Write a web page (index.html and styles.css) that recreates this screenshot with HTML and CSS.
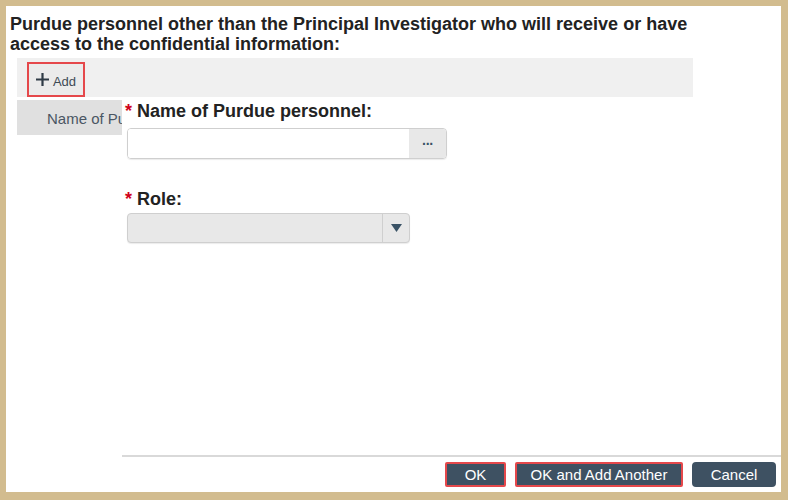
FILE: index.html
```html
<!DOCTYPE html>
<html lang="en">

<head>
    <meta charset="UTF-8">
    <meta name="viewport" content="width=device-width, initial-scale=1.0">
    <title>Purdue personnel</title>
    <link rel="stylesheet" href="styles.css">
</head>

<body>
    <div class="frame">
        <h1 class="question">Purdue personnel other than the Principal Investigator who will receive or have<br>
            access to the confidential information:</h1>

        <!-- Barra de herramientas -->
        <div class="toolbar">
            <button class="add-btn">
                <svg class="plus" width="13" height="13" viewBox="0 0 13 13">
                    <path d="M6.5 0 V13 M0 6.5 H13" stroke="#2f3b46" stroke-width="2.2" />
                </svg>
                Add
            </button>
        </div>

        <!-- Cabecera de la tabla -->
        <div class="table-head">
            <div class="head-cell">Name of Purdue personnel</div>
        </div>

        <!-- Dialogo encima de la tabla -->
        <div class="dialog">
            <div class="dialog-body">
                <div class="field">
                    <label class="field-label"><span class="req">*</span> Name of Purdue personnel:</label>
                    <div class="lookup">
                        <input type="text" class="lookup-input">
                        <span class="lookup-btn">&middot;&middot;&middot;</span>
                    </div>
                </div>

                <div class="field field-role">
                    <label class="field-label"><span class="req">*</span> Role:</label>
                    <div class="select">
                        <span class="select-value"></span>
                        <span class="select-arrow">
                            <svg width="11" height="8" viewBox="0 0 11 8">
                                <path d="M0 0 L11 0 L5.5 8 Z" fill="#3a5366" />
                            </svg>
                        </span>
                    </div>
                </div>
            </div>

            <div class="dialog-footer">
                <button class="btn btn-marked btn-ok">OK</button>
                <button class="btn btn-marked btn-another">OK and Add Another</button>
                <button class="btn btn-cancel">Cancel</button>
            </div>
        </div>
    </div>
</body>

</html>
```

FILE: styles.css
```css
body {
    margin: 0;
    padding: 0;
    font-family: "Liberation Sans", Arial, sans-serif;
    background-color: #fff;
}

.frame {
    position: relative;
    width: 788px;
    height: 500px;
    box-sizing: border-box;
    border-style: solid;
    border-color: #d2bc8f;
    border-width: 6px 7px 8px 6px;
    background-color: #fff;
    overflow: hidden;
}

.question {
    margin: 0;
    padding: 8px 0 0 4px;
    font-size: 18px;
    line-height: 20px;
    font-weight: bold;
    color: #222;
    white-space: nowrap;
}

.toolbar {
    margin: 4px 0 0 11px;
    width: 676px;
    height: 39px;
    background-color: #f0f0f0;
    display: flex;
    align-items: flex-end;
}

.add-btn {
    margin-left: 10px;
    width: 58px;
    height: 35px;
    box-sizing: border-box;
    border: 2px solid #e5484b;
    background-color: #ebebeb;
    color: #3e4a55;
    font-family: "Liberation Sans", Arial, sans-serif;
    font-size: 13px;
    padding: 3px 0 0 0;
    display: flex;
    align-items: center;
    justify-content: center;
    gap: 4px;
}

.plus {
    margin-top: -3px;
}

.table-head {
    margin: 3px 0 0 11px;
    display: flex;
}

.head-cell {
    width: 105px;
    height: 35px;
    box-sizing: border-box;
    padding: 10px 0 0 30px;
    background-color: #e0e0e0;
    color: #4a5663;
    font-size: 15px;
    white-space: nowrap;
    overflow: hidden;
}

/* Dialogo que tapa la tabla */
.dialog {
    position: absolute;
    left: 116px;
    top: 91px;
    right: 0;
    bottom: 0;
    background-color: #fff;
    display: flex;
    flex-direction: column;
}

.dialog-body {
    flex: 1;
    padding: 4px 0 0 3px;
}

.field-label {
    display: block;
    font-size: 18px;
    line-height: 20px;
    font-weight: bold;
    color: #222;
}

.req {
    color: #d0021b;
}

.lookup {
    margin: 7px 0 0 2px;
    width: 320px;
    height: 31px;
    box-sizing: border-box;
    border: 1px solid #cfcfcf;
    border-radius: 4px;
    display: flex;
    overflow: hidden;
    box-shadow: 0 1px 1px rgba(0, 0, 0, 0.08);
}

.lookup-input {
    flex: 1;
    border: none;
    outline: none;
    padding: 0;
}

.lookup-btn {
    width: 37px;
    background-color: #e8e8e8;
    color: #3a5366;
    font-size: 14px;
    font-weight: bold;
    letter-spacing: -1px;
    display: flex;
    align-items: center;
    justify-content: center;
}

.field-role {
    margin-top: 30px;
}

.select {
    margin: 4px 0 0 2px;
    width: 283px;
    height: 30px;
    box-sizing: border-box;
    border: 1px solid #cfcfcf;
    border-radius: 4px;
    background-color: #e8e8e8;
    display: flex;
    box-shadow: 0 1px 1px rgba(0, 0, 0, 0.08);
}

.select-value {
    flex: 1;
}

.select-arrow {
    width: 26px;
    border-left: 1px solid #cfcfcf;
    display: flex;
    align-items: center;
    justify-content: center;
}

.dialog-footer {
    border-top: 2px solid #d9d9d9;
    height: 37px;
    padding-top: 5px;
    box-sizing: border-box;
    display: flex;
    justify-content: flex-end;
    gap: 9px;
    padding-right: 5px;
}

.btn {
    height: 25px;
    box-sizing: border-box;
    background-color: #3e5162;
    color: #fff;
    border: 2px solid #3e5162;
    border-radius: 4px;
    font-family: "Liberation Sans", Arial, sans-serif;
    font-size: 15px;
    padding: 0;
}

.btn-marked {
    border-color: #e5484b;
    border-radius: 2px;
}

.btn-ok {
    width: 61px;
}

.btn-another {
    width: 168px;
}

.btn-cancel {
    width: 84px;
}
```
